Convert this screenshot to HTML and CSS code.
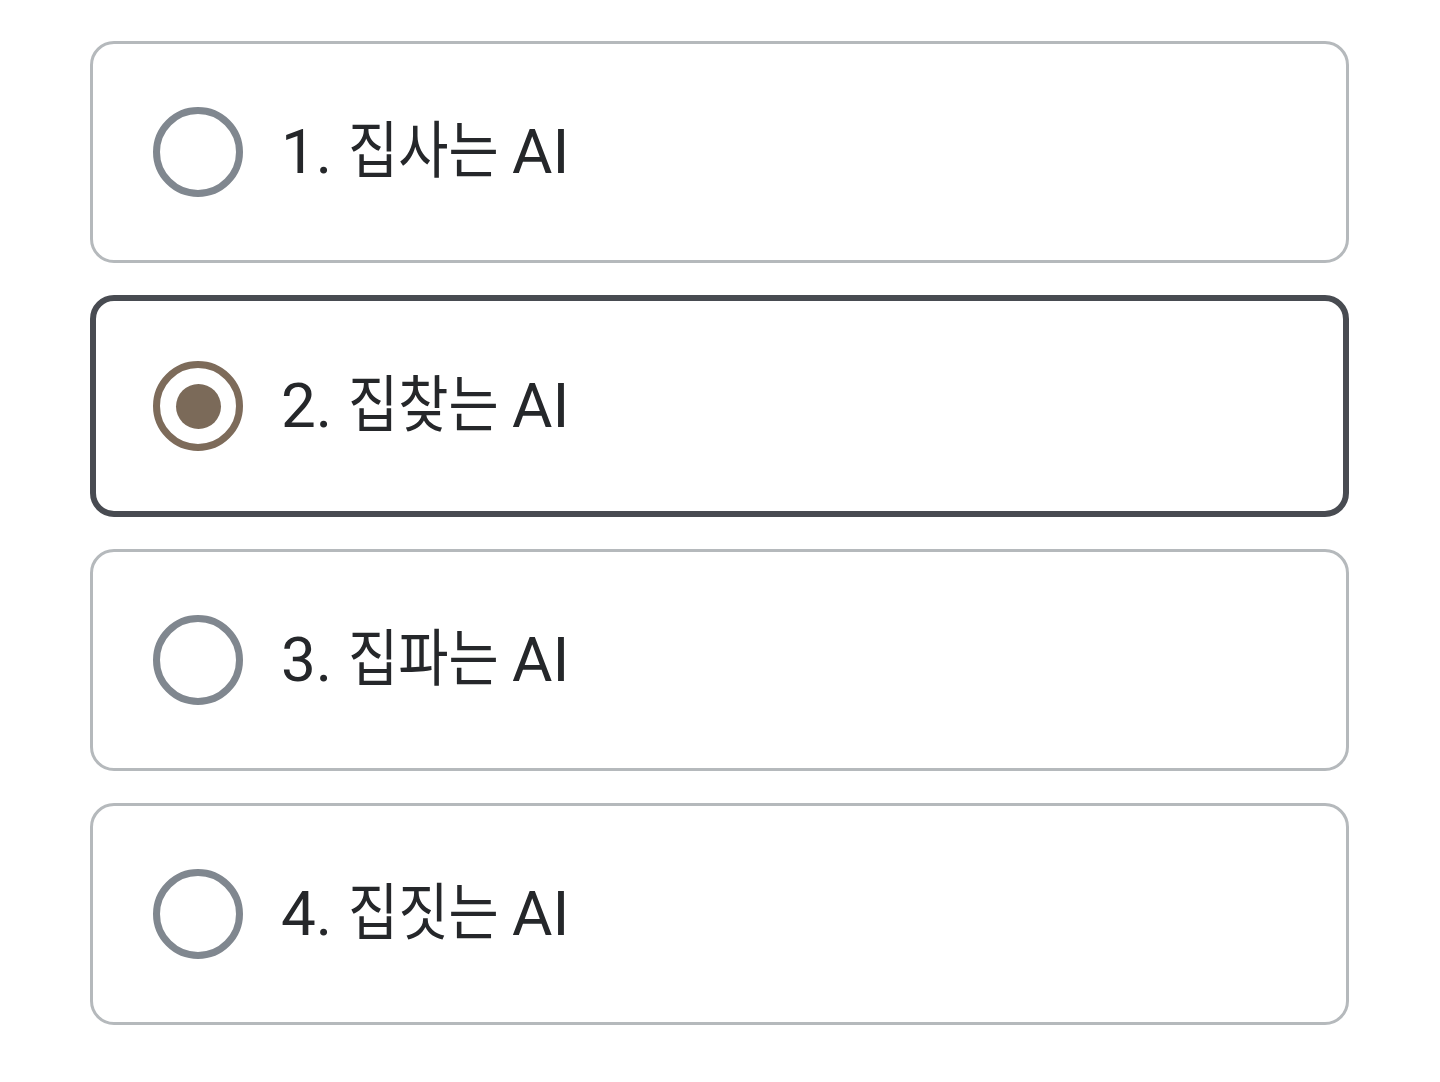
FILE: index.html
```html
<!DOCTYPE html>
<html lang="ko">
<head>
<meta charset="utf-8">
<link rel="stylesheet" href="styles.css">
</head>
<body>
<div class="list">
  <div class="option"><span class="radio"></span><span class="label">1. <span class="ko">집사는</span> AI</span></div>
  <div class="option selected"><span class="radio"><span class="dot"></span></span><span class="label">2. <span class="ko">집찾는</span> AI</span></div>
  <div class="option"><span class="radio"></span><span class="label">3. <span class="ko">집파는</span> AI</span></div>
  <div class="option"><span class="radio"></span><span class="label">4. <span class="ko">집짓는</span> AI</span></div>
</div>
</body>
</html>
```
FILE: styles.css
```css
html, body {
  margin: 0;
  padding: 0;
  background: #ffffff;
}
.list {
  display: flex;
  flex-direction: column;
  gap: 32px;
  padding: 41px 0 0 90px;
  width: 1259px;
}
.option {
  box-sizing: border-box;
  height: 222px;
  border: 3px solid #b5b9bc;
  border-radius: 24px;
  display: flex;
  align-items: center;
  padding-left: 60px;
  gap: 38px;
}
.option.selected {
  border: 6px solid #484b51;
  padding-left: 57px;
}
.radio {
  box-sizing: border-box;
  width: 90px;
  height: 90px;
  border-radius: 50%;
  border: 7px solid #80878f;
  display: flex;
  align-items: center;
  justify-content: center;
  flex: none;
}
.selected .radio {
  border-color: #7d6b5a;
}
.dot {
  width: 45px;
  height: 45px;
  border-radius: 50%;
  background: #7b6a59;
}
.label {
  font-family: Roboto, "Noto Sans CJK KR", sans-serif;
  font-size: 62px;
  font-weight: 400;
  color: #25272a;
  line-height: 1;
}
.ko {
  display: inline-block;
  transform: scaleX(0.88);
  transform-origin: left center;
  margin-right: -22px;
}
```
